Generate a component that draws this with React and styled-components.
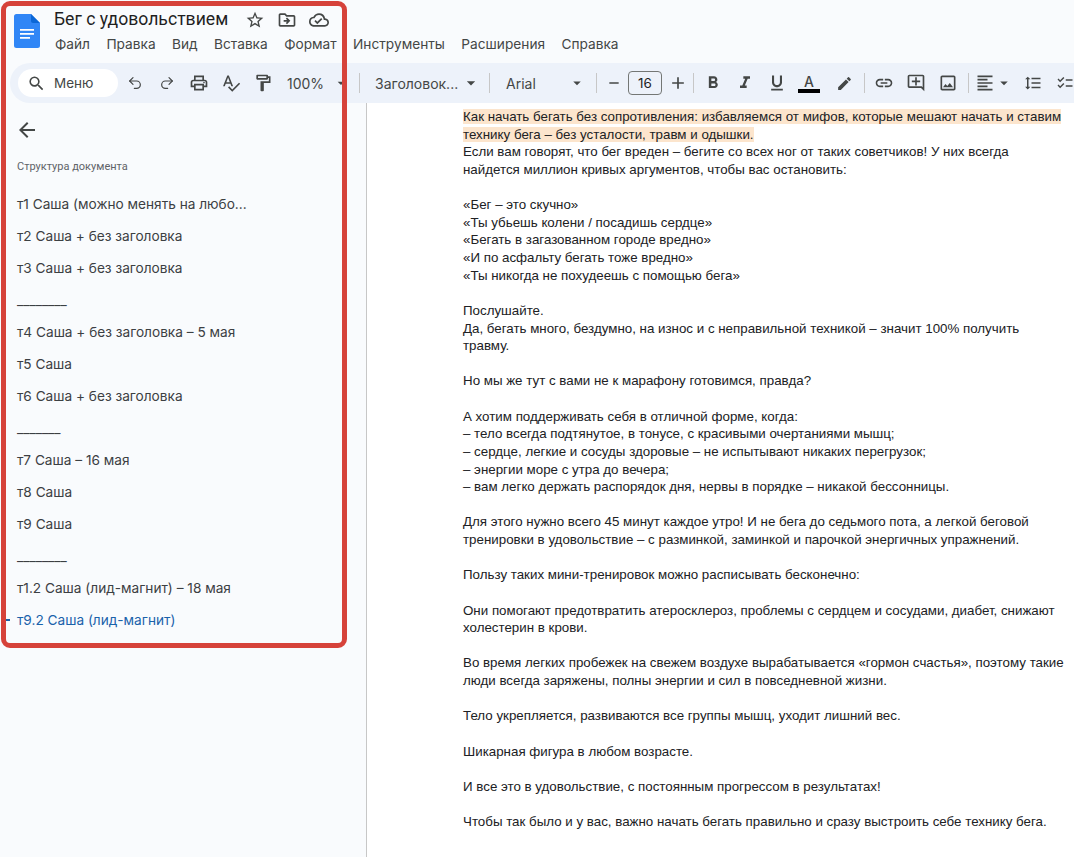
import React from "react";
import styled, { createGlobalStyle } from "styled-components";
import {
  MdSearch, MdOutlinePrint, MdSpellcheck, MdOutlineFormatPaint, MdArrowDropDown,
  MdRemove, MdAdd, MdFormatBold, MdFormatItalic, MdFormatUnderlined, MdEdit, MdLink,
  MdOutlineAddComment, MdOutlineImage, MdFormatAlignLeft, MdFormatLineSpacing, MdChecklist,
  MdStarBorder, MdOutlineDriveFileMove, MdOutlineCloudDone, MdArrowBack,
} from "react-icons/md";
import { Undo2, Redo2 } from "lucide-react";

const Global = createGlobalStyle`
  html, body { margin: 0; padding: 0; height: 857px; overflow: hidden; background: #f9fbfd; }
  * { box-sizing: border-box; }
`;
const Page = styled.div`
  position: relative; width: 1074px; height: 857px; overflow: hidden;
  display: flex; flex-direction: column; font-family: Roboto, "Liberation Sans", sans-serif; color: #444746;
`;
const Highlight = styled.div`
  position: absolute; left: 1px; top: 1px; width: 346px; height: 647px;
  border: 5px solid #d6423a; border-radius: 9px; pointer-events: none;
`;
const Header = styled.header`
  height: 63px; flex: none; display: flex; padding: 14px 0 0 14px; gap: 14px;
`;
const HeadText = styled.div` display: flex; flex-direction: column; margin-top: -5px; `;
const TitleRow = styled.div` display: flex; align-items: center; height: 21px; `;
const Title = styled.h1`
  margin: 0 11px 0 0; font: 400 17.6px/21px Roboto, sans-serif; color: #1f1f1f;
`;
const TitleIcon = styled.span`
  width: 32px; height: 20px; display: flex; align-items: center; justify-content: center;
  color: #444746; font-size: 20px;
`;
const Menu = styled.nav` display: flex; gap: 16.4px; margin: 5px 0 0 1px; `;
const MenuItem = styled.span` font: 400 13.7px/18px Inter, sans-serif; color: #444746; `;
const Toolbar = styled.div`
  height: 40px; flex: none; margin-left: 10px; padding-left: 8px; background: #edf2fa;
  border-radius: 20px 0 0 20px; display: flex; align-items: center; overflow: hidden;
`;
const SearchPill = styled.div`
  width: 100px; height: 28px; flex: none; border-radius: 14px; background: #fff; display: flex; align-items: center;
  padding-left: 9px; gap: 8px; font: 400 13.5px Inter, sans-serif; color: #444746; margin-right: 1px;
  svg { font-size: 19px; }
`;
const Tool = styled.span`
  width: ${(p) => p.$w || 32}px; height: 28px; flex: none; display: flex; align-items: center; justify-content: center;
  font-size: ${(p) => p.$size || 20}px; color: #444746;
`;
const Caret = styled.span`
  width: ${(p) => p.$w || 16}px; height: 28px; flex: none; display: flex; align-items: center; justify-content: center;
  font-size: 20px; color: #444746;
`;
const Sep = styled.span`
  width: 1px; height: 20px; flex: none; background: #c7c7c7; margin: 0 ${(p) => p.$r ?? 10}px 0 ${(p) => p.$l ?? 10}px;
`;
const ToolText = styled.span`
  width: ${(p) => p.$w}px; flex: none; padding-left: ${(p) => p.$pad || 0}px; white-space: nowrap;
  font: 400 14px Inter, sans-serif; color: #444746;
`;
const SizeBox = styled.span`
  width: 34px; height: 24px; flex: none; margin-left: 6px; border: 1px solid #747775; border-radius: 4px; display: flex;
  align-items: center; justify-content: center; font: 400 13.5px Inter, sans-serif; color: #1f1f1f;
`;
const ColorTool = styled.span`
  width: 32px; height: 28px; flex: none; padding-top: 6px; display: flex; flex-direction: column; align-items: center;
`;
const ColorA = styled.span` font: 500 14px/14px Inter, sans-serif; color: #444746; `;
const ColorBar = styled.span` width: 22px; height: 3.5px; background: #000; flex: none; `;
const Body = styled.div` flex: 1; min-height: 0; display: grid; grid-template-columns: 367px 1fr; `;
const Side = styled.aside` border-right: 1px solid #c7c7c7; padding: 16px 0 0 17px; position: relative; `;
const Back = styled.div` height: 22px; font-size: 24px; line-height: 0; margin: -1px 0 1px -2px; color: #444746; `;
const SideLabel = styled.div`
  margin-top: 20px; font: 400 11px/14px Roboto, sans-serif; color: #5f6368;
`;
const SideList = styled.div` margin-top: 14px; display: flex; flex-direction: column; `;
const Row = styled.div`
  height: 32px; line-height: 32px; font-size: 13.65px; font-family: Inter, Roboto, sans-serif; white-space: nowrap;
  color: ${(p) => (p.$active ? "#1a62ab" : "#3c4043")}; position: relative;
  ${(p) => p.$active && `&::before { content: ""; position: absolute; left: -12px; top: 15px; width: 5px; height: 1.5px; background: #1a62ab; }`}
`;
const Doc = styled.main`
  background: #fff; padding: 5px 0 0 96px; font: 400 13.33px/17.63px "Liberation Sans", Arial, sans-serif; color: #202124;
`;
const Para = styled.p` margin: 0 0 17.63px; width: 605px; `;
const Lead = styled.div` width: 605px; `;
const Line = styled.div``;
const Mark = styled.span` background: #fce5cd; `;

const DocsLogo = () => (
  <svg width="26" height="34" viewBox="0 0 26 34" style={{ flex: "none" }}>
    <path d="M2.5 0H17l9 9v22.5a2.5 2.5 0 0 1-2.5 2.5h-21A2.5 2.5 0 0 1 0 31.5v-29A2.5 2.5 0 0 1 2.5 0z" fill="#3086f6" />
    <path d="M17 0l9 9h-7a2 2 0 0 1-2-2z" fill="#0c67d6" />
    <path d="M6 15h14v1.8H6zM6 19h14v1.8H6zM6 23h10v1.8H6z" fill="#fff" />
  </svg>
);

const menu = ["Файл", "Правка", "Вид", "Вставка", "Формат", "Инструменты", "Расширения", "Справка"];
const rows = [
  "т1 Саша (можно менять на любо...", "т2 Саша + без заголовка", "т3 Саша + без заголовка", "________",
  "т4 Саша + без заголовка – 5 мая", "т5 Саша", "т6 Саша + без заголовка", "_______",
  "т7 Саша – 16 мая", "т8 Саша", "т9 Саша", "________", "т1.2 Саша (лид-магнит) – 18 мая",
];
const paras = [
  ["Если вам говорят, что бег вреден – бегите со всех ног от таких советчиков! У них всегда найдется миллион кривых аргументов, чтобы вас остановить:"],
  ["«Бег – это скучно»", "«Ты убьешь колени / посадишь сердце»", "«Бегать в загазованном городе вредно»", "«И по асфальту бегать тоже вредно»", "«Ты никогда не похудеешь с помощью бега»"],
  ["Послушайте.", "Да, бегать много, бездумно, на износ и с неправильной техникой – значит 100% получить травму."],
  ["Но мы же тут с вами не к марафону готовимся, правда?"],
  ["А хотим поддерживать себя в отличной форме, когда:", "– тело всегда подтянутое, в тонусе, с красивыми очертаниями мышц;", "– сердце, легкие и сосуды здоровые – не испытывают никаких перегрузок;", "– энергии море с утра до вечера;", "– вам легко держать распорядок дня, нервы в порядке – никакой бессонницы."],
  ["Для этого нужно всего 45 минут каждое утро! И не бега до седьмого пота, а легкой беговой тренировки в удовольствие – с разминкой, заминкой и парочкой энергичных упражнений."],
  ["Пользу таких мини-тренировок можно расписывать бесконечно:"],
  ["Они помогают предотвратить атеросклероз, проблемы с сердцем и сосудами, диабет, снижают холестерин в крови."],
  ["Во время легких пробежек на свежем воздухе вырабатывается «гормон счастья», поэтому такие люди всегда заряжены, полны энергии и сил в повседневной жизни."],
  ["Тело укрепляется, развиваются все группы мышц, уходит лишний вес."],
  ["Шикарная фигура в любом возрасте."],
  ["И все это в удовольствие, с постоянным прогрессом в результатах!"],
  ["Чтобы так было и у вас, важно начать бегать правильно и сразу выстроить себе технику бега."],
];

export default function App() {
  return (
    <Page>
      <Global />
      <Header>
        <DocsLogo />
        <HeadText>
          <TitleRow>
            <Title>Бег с удовольствием</Title>
            <TitleIcon><MdStarBorder /></TitleIcon>
            <TitleIcon><MdOutlineDriveFileMove /></TitleIcon>
            <TitleIcon><MdOutlineCloudDone /></TitleIcon>
          </TitleRow>
          <Menu>{menu.map((m) => <MenuItem key={m}>{m}</MenuItem>)}</Menu>
        </HeadText>
      </Header>
      <Toolbar>
        <SearchPill><MdSearch />Меню</SearchPill>
        <Tool><Undo2 size={16} strokeWidth={1.8} /></Tool>
        <Tool><Redo2 size={16} strokeWidth={1.8} /></Tool>
        <Tool><MdOutlinePrint /></Tool>
        <Tool><MdSpellcheck /></Tool>
        <Tool><MdOutlineFormatPaint /></Tool>
        <ToolText $w={54} $pad={8}>100%</ToolText>
        <Caret><MdArrowDropDown /></Caret>
        <Sep $l={10} $r={15} />
        <ToolText $w={84}>Заголовок...</ToolText>
        <Caret $w={24}><MdArrowDropDown /></Caret>
        <Sep $l={6} $r={16} />
        <ToolText $w={62}>Arial</ToolText>
        <Caret $w={18}><MdArrowDropDown /></Caret>
        <Sep $l={10} $r={9} />
        <Tool $w={16} $size={18}><MdRemove /></Tool>
        <SizeBox>16</SizeBox>
        <Tool $w={31} $size={20}><MdAdd /></Tool>
        <Sep $l={0} $r={3} />
        <Tool $size={20}><MdFormatBold /></Tool>
        <Tool $size={20}><MdFormatItalic /></Tool>
        <Tool $size={20}><MdFormatUnderlined /></Tool>
        <ColorTool><ColorA>A</ColorA><ColorBar /></ColorTool>
        <Tool $w={38} $size={17}><MdEdit /></Tool>
        <Sep $l={1} $r={3} />
        <Tool $size={20}><MdLink /></Tool>
        <Tool $size={20}><MdOutlineAddComment /></Tool>
        <Tool $size={20}><MdOutlineImage /></Tool>
        <Sep $l={4} $r={6} />
        <Tool $w={20}><MdFormatAlignLeft /></Tool>
        <Caret $w={18}><MdArrowDropDown /></Caret>
        <Tool $w={40} $size={18}><MdFormatLineSpacing /></Tool>
        <Tool $w={24} $size={18}><MdChecklist /></Tool>
      </Toolbar>
      <Body>
        <Side>
          <Back><MdArrowBack /></Back>
          <SideLabel>Структура документа</SideLabel>
          <SideList>
            {rows.map((r, i) => <Row key={i}>{r}</Row>)}
            <Row $active>т9.2 Саша (лид-магнит)</Row>
          </SideList>
        </Side>
        <Doc>
          <Lead>
            <Mark>Как начать бегать без сопротивления: избавляемся от мифов, которые мешают начать и ставим технику бега – без усталости, травм и одышки.</Mark>
          </Lead>
          {paras.map((p, i) => (
            <Para key={i}>{p.map((l, j) => <Line key={j}>{l}</Line>)}</Para>
          ))}
        </Doc>
      </Body>
      <Highlight />
    </Page>
  );
}
